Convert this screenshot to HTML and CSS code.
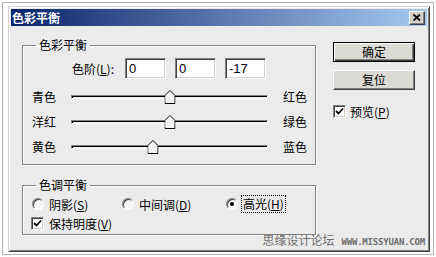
FILE: index.html
```html
<!DOCTYPE html>
<html lang="zh-CN">
<head>
    <meta charset="UTF-8">
    <title>色彩平衡</title>
    <link rel="stylesheet" href="styles.css">
</head>
<body>
    <div class="frame">
        <div class="dialog">
            <div class="titlebar">
                <span class="title">色彩平衡</span>
                <span class="close-btn">
                    <svg width="8" height="7" viewBox="0 0 8 7"><path d="M0.5 0.5 L7 6.5 M7 0.5 L0.5 6.5" stroke="#000" stroke-width="1.8"/></svg>
                </span>
            </div>
            <div class="dialog-body">
                <div class="main-col">
                    <fieldset class="group group-color">
                        <legend>色彩平衡</legend>
                        <div class="levels-row">
                            <label class="levels-label">色阶(<u>L</u>):</label>
                            <input class="level-input" type="text" value="0">
                            <input class="level-input" type="text" value="0">
                            <input class="level-input" type="text" value="-17">
                        </div>
                        <div class="slider-row">
                            <span class="slider-label">青色</span>
                            <div class="track">
                                <span class="thumb" style="left: 50%"><svg width="11" height="14" viewBox="0 0 11 14"><path d="M0.5 13.5 V5.5 L5.5 0.5 L10.5 5.5 V13.5 Z" fill="#f2f2f2" stroke="#000"/><path d="M1.5 12.5 V5.9 L5.5 1.9" fill="none" stroke="#fff"/></svg></span>
                            </div>
                            <span class="slider-label">红色</span>
                        </div>
                        <div class="slider-row">
                            <span class="slider-label">洋红</span>
                            <div class="track">
                                <span class="thumb" style="left: 50%"><svg width="11" height="14" viewBox="0 0 11 14"><path d="M0.5 13.5 V5.5 L5.5 0.5 L10.5 5.5 V13.5 Z" fill="#f2f2f2" stroke="#000"/><path d="M1.5 12.5 V5.9 L5.5 1.9" fill="none" stroke="#fff"/></svg></span>
                            </div>
                            <span class="slider-label">绿色</span>
                        </div>
                        <div class="slider-row">
                            <span class="slider-label">黄色</span>
                            <div class="track">
                                <span class="thumb" style="left: 41.5%"><svg width="11" height="14" viewBox="0 0 11 14"><path d="M0.5 13.5 V5.5 L5.5 0.5 L10.5 5.5 V13.5 Z" fill="#f2f2f2" stroke="#000"/><path d="M1.5 12.5 V5.9 L5.5 1.9" fill="none" stroke="#fff"/></svg></span>
                            </div>
                            <span class="slider-label">蓝色</span>
                        </div>
                    </fieldset>

                    <fieldset class="group group-tone">
                        <legend>色调平衡</legend>
                        <div class="radio-row">
                            <label class="radio-item item-shadow"><span class="radio"></span>阴影(<u>S</u>)</label>
                            <label class="radio-item item-mid"><span class="radio"></span>中间调(<u>D</u>)</label>
                            <label class="radio-item"><span class="radio checked"></span><span class="focus">高光(<u>H</u>)</span></label>
                        </div>
                        <label class="check-item tone-check">
                            <span class="checkbox"><svg width="9" height="9" viewBox="0 0 9 9"><path d="M1 4 L3.5 6.5 L8 1.5" fill="none" stroke="#000" stroke-width="1.8"/></svg></span>保持明度(<u>V</u>)
                        </label>
                    </fieldset>
                </div>

                <div class="side-col">
                    <button class="btn btn-default">确定</button>
                    <button class="btn">复位</button>
                    <label class="check-item preview-check">
                        <span class="checkbox"><svg width="9" height="9" viewBox="0 0 9 9"><path d="M1 4 L3.5 6.5 L8 1.5" fill="none" stroke="#000" stroke-width="1.8"/></svg></span>预览(<u>P</u>)
                    </label>
                </div>
            </div>
        </div>
        <div class="watermark">思缘设计论坛<span class="site">WWW.MISSYUAN.COM</span></div>
    </div>
</body>
</html>
```

FILE: styles.css
```css
* {
    box-sizing: border-box;
}
body {
    margin: 0;
    background-color: #ffffff;
    color: #000000;
    font-family: "Noto Sans CJK SC", sans-serif;
    font-size: 12px;
}
.frame {
    position: relative;
    width: 432px;
    height: 253px;
    margin: 2px;
    border: 1px solid #b4b4b4;
    padding: 3px 3px 0 5px;
}
.dialog {
    height: 246px;
    background-color: #ebebeb;
    border: 1px solid;
    border-color: #d4d0c8 #404040 #404040 #d4d0c8;
    box-shadow: inset 1px 1px 0 #ffffff, inset -1px -1px 0 #808080;
    padding: 2px;
}
.titlebar {
    height: 17px;
    display: flex;
    align-items: center;
    justify-content: space-between;
    padding: 0 2px 0 1px;
    background: linear-gradient(to right, #0a246a, #a6caf0);
}
.title {
    color: #ffffff;
    font-weight: bold;
    line-height: 14px;
}
.close-btn {
    width: 16px;
    height: 14px;
    display: flex;
    align-items: center;
    justify-content: center;
    background-color: #d4d0c8;
    border: 1px solid;
    border-color: #ffffff #404040 #404040 #ffffff;
    box-shadow: inset -1px -1px 0 #808080;
}
.dialog-body {
    display: flex;
    padding: 12px 0 0 11px;
}
.main-col {
    width: 294px;
}
.group {
    margin: 0;
    padding: 0;
    border: 1px solid #808080;
    box-shadow: inset 1px 1px 0 #ffffff, 1px 1px 0 #ffffff;
}
.group legend {
    margin-left: 13px;
    padding: 0 3px;
    line-height: 14px;
}
.group-color {
    padding: 6px 0 10px 0;
}
.group-tone {
    margin-top: 13px;
    padding: 4px 0 4px 0;
}
.levels-row {
    display: flex;
    align-items: center;
    height: 21px;
    padding-left: 49px;
}
.levels-label {
    width: 53px;
}
.level-input {
    width: 41px;
    height: 21px;
    margin: 0 9px 0 0;
    padding: 0 3px;
    font-family: "Liberation Sans", sans-serif;
    font-size: 13px;
    background-color: #ffffff;
    border: 1px solid;
    border-color: #808080 #ffffff #ffffff #808080;
    box-shadow: inset 1px 1px 0 #404040, inset -1px -1px 0 #d4d0c8;
    outline: none;
}
.slider-row {
    display: flex;
    align-items: center;
    height: 14px;
    margin-top: 11px;
    padding-left: 9px;
}
.slider-label {
    width: 24px;
    line-height: 14px;
}
.track {
    position: relative;
    width: 197px;
    height: 4px;
    margin: 0 15px;
    background-color: #ebebeb;
    border: 1px solid;
    border-color: #808080 #ffffff #ffffff #808080;
    box-shadow: inset 1px 1px 0 #000000;
}
.thumb {
    position: absolute;
    top: -6px;
    width: 11px;
    height: 14px;
    transform: translateX(-50%);
}
.thumb svg {
    display: block;
}
.radio-row {
    display: flex;
    align-items: center;
    height: 16px;
    padding-left: 9px;
}
.radio-item {
    display: flex;
    align-items: center;
}
.item-shadow {
    width: 90px;
}
.item-mid {
    width: 104px;
}
.radio {
    position: relative;
    width: 12px;
    height: 12px;
    margin-right: 5px;
    border-radius: 50%;
    border: 1px solid;
    border-color: #808080 #ffffff #ffffff #808080;
    background-color: #f4f4f4;
    box-shadow: inset 1px 1px 0 #404040;
}
.radio.checked::after {
    content: "";
    position: absolute;
    left: 3px;
    top: 3px;
    width: 4px;
    height: 4px;
    border-radius: 50%;
    background-color: #000000;
}
.focus {
    outline: 1px dotted #000000;
    outline-offset: 1px;
    line-height: 14px;
}
.check-item {
    display: flex;
    align-items: center;
    height: 13px;
}
.checkbox {
    width: 13px;
    height: 13px;
    display: flex;
    align-items: center;
    justify-content: center;
    margin-right: 5px;
    background-color: #ffffff;
    border: 1px solid;
    border-color: #808080 #ffffff #ffffff #808080;
    box-shadow: inset 1px 1px 0 #404040, inset -1px -1px 0 #d4d0c8;
}
.tone-check {
    margin-top: 5px;
    padding-left: 8px;
}
.side-col {
    width: 82px;
    margin-left: 17px;
    padding-top: 4px;
    display: flex;
    flex-direction: column;
}
.btn {
    width: 82px;
    height: 20px;
    padding: 0;
    font-family: "Noto Sans CJK SC", sans-serif;
    font-size: 12px;
    line-height: 14px;
    color: #000000;
    background-color: #dcdad5;
    border: 1px solid;
    border-color: #ffffff #404040 #404040 #ffffff;
    box-shadow: inset -1px -1px 0 #808080;
}
.btn + .btn {
    margin-top: 8px;
}
.btn-default {
    border-color: #000000;
    box-shadow: inset 1px 1px 0 #ffffff, inset -1px -1px 0 #404040, inset -2px -2px 0 #808080;
}
.preview-check {
    margin-top: 15px;
}
.preview-check .checkbox {
    margin-right: 4px;
}
.watermark {
    position: absolute;
    right: 8px;
    bottom: 5px;
    color: #6e6e6e;
    font-size: 12px;
    line-height: 14px;
    white-space: nowrap;
}
.watermark .site {
    margin-left: 7px;
    font-family: "DejaVu Sans Mono", monospace;
    font-weight: bold;
    font-size: 9px;
    letter-spacing: -0.2px;
}
```
